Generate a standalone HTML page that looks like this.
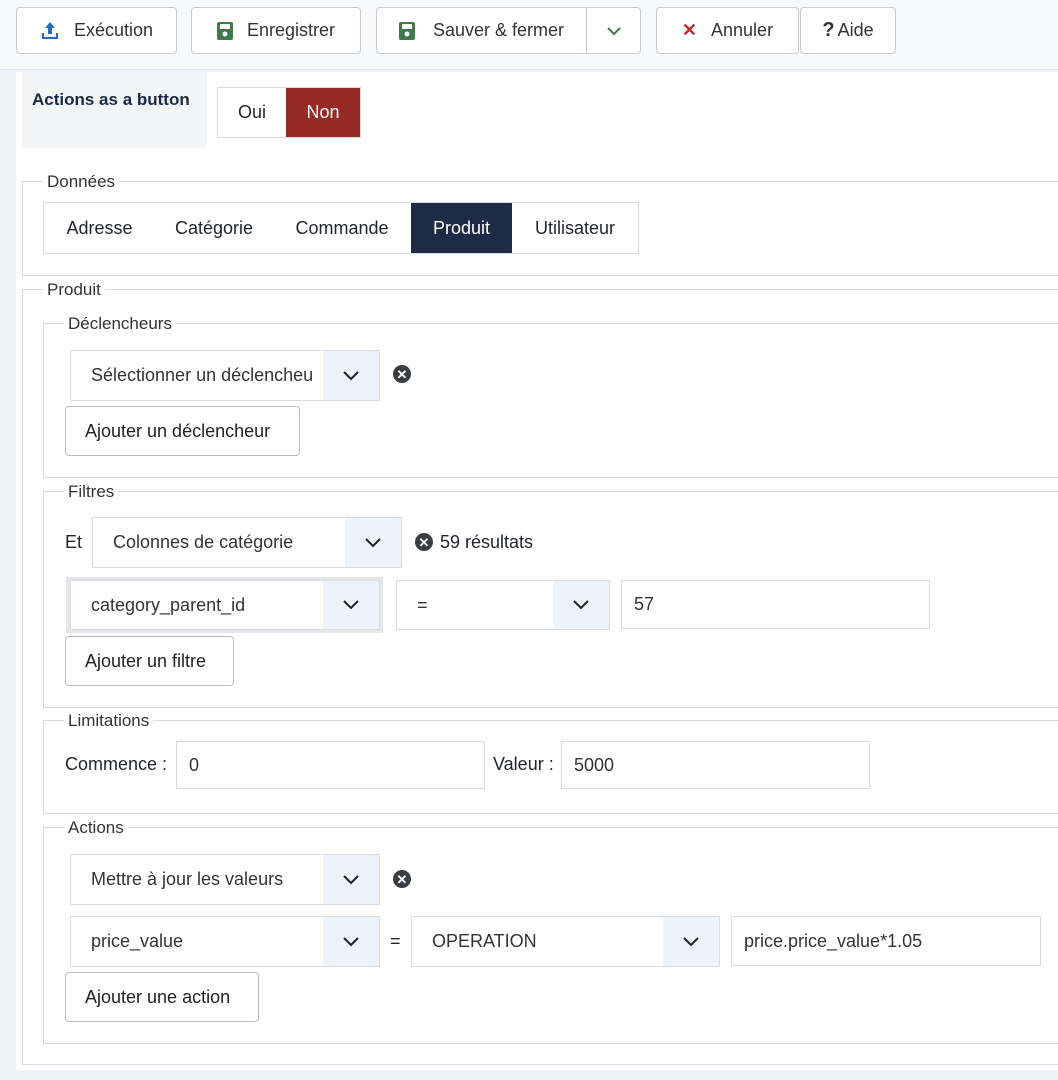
<!DOCTYPE html>
<html><head><meta charset="utf-8"><style>
*{box-sizing:border-box;margin:0;padding:0}
body{width:1058px;height:1080px;background:#eef1f5;font-family:"Liberation Sans",Arial,sans-serif;font-size:18px;color:#22262a;position:relative;overflow:hidden}
.a{position:absolute}
.tb{left:0;top:0;width:1058px;height:70px;background:#f8f9fa;border-bottom:1px solid #e3e6ea}
.btn{position:absolute;border:1px solid #c8ccd2;border-radius:4px;background:#fff;display:flex;align-items:center;justify-content:center;gap:14px;color:#333}
.panel{left:16px;top:72px;width:1042px;height:998px;background:#fff}
.fs{position:absolute;border:1px solid #d6d9dd;border-right:none}
.lg{position:absolute;background:#fff;padding:0 4px;color:#333;font-size:17px;line-height:20px}
.sel{position:absolute;border:1px solid #d8dbe0;background:#fff;display:flex;align-items:center;padding-left:20px;color:#333;white-space:nowrap;overflow:hidden}
.sel .ar{position:absolute;right:0;top:0;bottom:0;width:56px;background:#eef2fa;display:flex;align-items:center;justify-content:center}
.inp{position:absolute;border:1px solid #d8dbe0;background:#fff;display:flex;align-items:center;padding-left:12px;color:#333}
.wb{position:absolute;border:1px solid #b8bcc2;border-radius:4px;background:#fff;display:flex;align-items:center;padding-left:19px;color:#222}
.x{position:absolute;width:18px;height:18px;border-radius:50%;background:#3a3d42;color:#fff;font-size:13px;font-weight:bold;display:flex;align-items:center;justify-content:center;line-height:1}
.t{position:absolute;line-height:20px}
</style></head><body>
<div class="a tb"></div>
<div class="btn" style="left:16px;top:7px;width:161px;height:47px"><svg width="20" height="20" viewBox="0 0 20 20"><path d="M10 1 L15 7 H12 V13 H8 V7 H5 Z" fill="#2a6cc2"/><path d="M2 12 V18 H18 V12 H16 V16 H4 V12 Z" fill="#2a6cc2"/></svg>Exécution</div>
<div class="btn" style="left:191px;top:7px;width:170px;height:47px"><svg width="16" height="18" viewBox="0 0 16 18"><rect x="0" y="0" width="16" height="18" rx="2" fill="#3e7a4a"/><rect x="3" y="2" width="10" height="5" fill="#fff"/><circle cx="8" cy="12" r="2.5" fill="#fff"/></svg>Enregistrer</div>
<div class="btn" style="left:376px;top:7px;width:265px;height:47px;justify-content:flex-start;padding-left:22px"><svg width="16" height="18" viewBox="0 0 16 18"><rect x="0" y="0" width="16" height="18" rx="2" fill="#3e7a4a"/><rect x="3" y="2" width="10" height="5" fill="#fff"/><circle cx="8" cy="12" r="2.5" fill="#fff"/></svg><span style="margin-left:4px">Sauver &amp; fermer</span><div class="a" style="left:209px;top:0;bottom:0;border-left:1px solid #c8ccd2;width:55px;display:flex;align-items:center;justify-content:center"><svg width="14" height="10" viewBox="0 0 14 10"><path d="M1 2 L7 8 L13 2" stroke="#3e7a4a" stroke-width="2" fill="none"/></svg></div></div>
<div class="btn" style="left:656px;top:7px;width:143px;height:47px"><span style="color:#c52727;font-weight:bold;font-size:18px">✕</span>Annuler</div>
<div class="btn" style="left:800px;top:7px;width:96px;height:47px;gap:3px"><b style="font-size:20px;color:#333">?</b>Aide</div>
<div class="a panel"></div>
<div class="a" style="left:22px;top:72px;width:185px;height:76px;background:#f4f5f7;padding:18px 0 0 10px;font-weight:bold;color:#1a2a45;font-size:17px">Actions as a button</div>
<div class="a" style="left:217px;top:87px;width:144px;height:51px;border:1px solid #d8dbe0;display:flex"><div style="width:68px;display:flex;align-items:center;justify-content:center">Oui</div><div style="flex:1;background:#962a25;color:#fff;display:flex;align-items:center;justify-content:center">Non</div></div>

<div class="fs" style="left:22px;top:181px;width:1036px;height:95px"></div><div class="lg" style="left:43px;top:172px">Données</div>
<div class="a" style="left:43px;top:202px;width:596px;height:52px;border:1px solid #d8dbe0;display:flex;align-items:center">
<span style="width:111px;text-align:center">Adresse</span><span style="width:118px;text-align:center">Catégorie</span><span style="width:138px;text-align:center">Commande</span><span style="width:101px;height:50px;background:#1e2b45;color:#fff;display:flex;align-items:center;justify-content:center">Produit</span><span style="width:126px;text-align:center">Utilisateur</span></div>

<div class="fs" style="left:22px;top:289px;width:1036px;height:776px"></div><div class="lg" style="left:43px;top:280px">Produit</div>

<div class="fs" style="left:43px;top:323px;width:1015px;height:155px"></div><div class="lg" style="left:64px;top:314px">Déclencheurs</div>
<div class="sel" style="left:70px;top:350px;width:310px;height:51px">Sélectionner un déclencheu<div class="ar"><svg width="16" height="10"><path d="M1 1 L8 8 L15 1" stroke="#222" stroke-width="2" fill="none"/></svg></div></div>
<div class="x" style="left:393px;top:365px">✕</div>
<div class="wb" style="left:65px;top:406px;width:235px;height:50px">Ajouter un déclencheur</div>

<div class="fs" style="left:43px;top:491px;width:1015px;height:217px"></div><div class="lg" style="left:64px;top:482px">Filtres</div>
<div class="t" style="left:65px;top:532px">Et</div>
<div class="sel" style="left:92px;top:517px;width:310px;height:51px">Colonnes de catégorie<div class="ar"><svg width="16" height="10"><path d="M1 1 L8 8 L15 1" stroke="#222" stroke-width="2" fill="none"/></svg></div></div>
<div class="x" style="left:415px;top:533px">✕</div><div class="t" style="left:440px;top:532px">59 résultats</div>
<div class="a" style="left:66px;top:577px;width:317px;height:56px;background:#e4e6e9"></div>
<div class="sel" style="left:70px;top:580px;width:310px;height:50px">category_parent_id<div class="ar"><svg width="16" height="10"><path d="M1 1 L8 8 L15 1" stroke="#222" stroke-width="2" fill="none"/></svg></div></div>
<div class="sel" style="left:396px;top:580px;width:214px;height:50px">=<div class="ar"><svg width="16" height="10"><path d="M1 1 L8 8 L15 1" stroke="#222" stroke-width="2" fill="none"/></svg></div></div>
<div class="inp" style="left:621px;top:580px;width:309px;height:49px">57</div>
<div class="wb" style="left:65px;top:636px;width:169px;height:50px">Ajouter un filtre</div>

<div class="fs" style="left:43px;top:720px;width:1015px;height:94px"></div><div class="lg" style="left:64px;top:711px">Limitations</div>
<div class="t" style="left:65px;top:754px">Commence :</div>
<div class="inp" style="left:176px;top:741px;width:309px;height:48px">0</div>
<div class="t" style="left:493px;top:754px">Valeur :</div>
<div class="inp" style="left:561px;top:741px;width:309px;height:48px">5000</div>

<div class="fs" style="left:43px;top:827px;width:1015px;height:217px"></div><div class="lg" style="left:64px;top:818px">Actions</div>
<div class="sel" style="left:70px;top:854px;width:310px;height:51px">Mettre à jour les valeurs<div class="ar"><svg width="16" height="10"><path d="M1 1 L8 8 L15 1" stroke="#222" stroke-width="2" fill="none"/></svg></div></div>
<div class="x" style="left:393px;top:870px">✕</div>
<div class="sel" style="left:70px;top:916px;width:310px;height:51px">price_value<div class="ar"><svg width="16" height="10"><path d="M1 1 L8 8 L15 1" stroke="#222" stroke-width="2" fill="none"/></svg></div></div>
<div class="t" style="left:390px;top:931px">=</div>
<div class="sel" style="left:411px;top:916px;width:309px;height:51px">OPERATION<div class="ar"><svg width="16" height="10"><path d="M1 1 L8 8 L15 1" stroke="#222" stroke-width="2" fill="none"/></svg></div></div>
<div class="inp" style="left:731px;top:916px;width:310px;height:50px">price.price_value*1.05</div>
<div class="wb" style="left:65px;top:972px;width:194px;height:50px">Ajouter une action</div>
</body></html>
